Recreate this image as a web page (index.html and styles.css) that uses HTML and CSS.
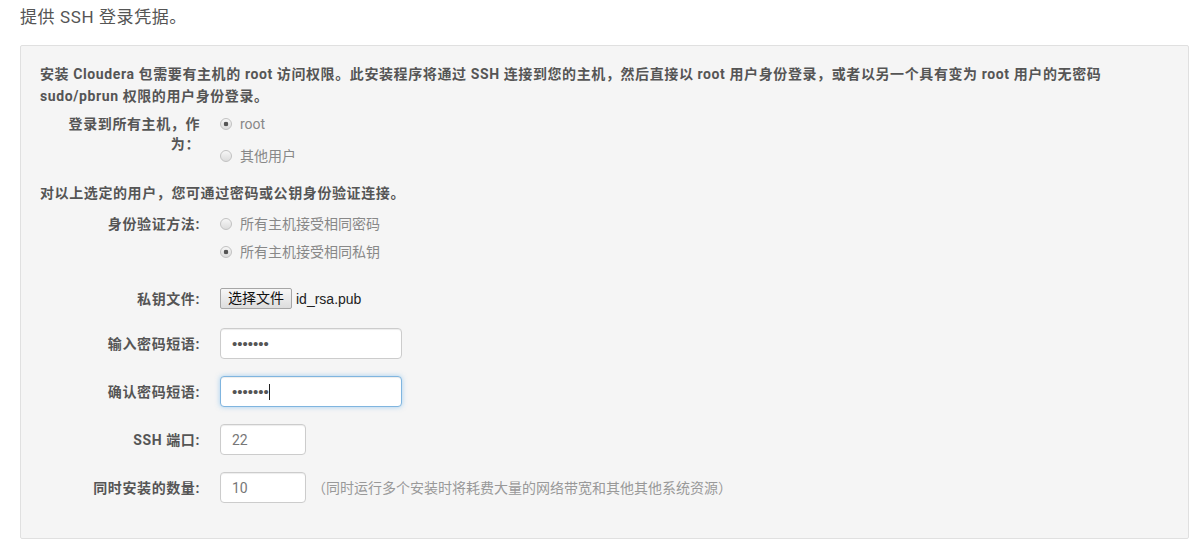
FILE: index.html
```html
<!DOCTYPE html>
<html lang="zh-CN">
<head>
  <meta charset="UTF-8" />
  <title>提供 SSH 登录凭据</title>
  <link rel="stylesheet" href="styles.css">
</head>
<body>
  <div class="page">
    <h1 class="page-title">提供 SSH 登录凭据。</h1>

    <form class="well">
      <p class="intro">安装 Cloudera 包需要有主机的 root 访问权限。此安装程序将通过 SSH 连接到您的主机，然后直接以 root 用户身份登录，或者以另一个具有变为 root 用户的无密码 sudo/pbrun 权限的用户身份登录。</p>

      <div class="control-group group-login">
        <label class="control-label">登录到所有主机，作<br>为：</label>
        <div class="controls">
          <label class="radio"><input type="radio" name="user" checked> root</label>
          <label class="radio"><input type="radio" name="user"> 其他用户</label>
        </div>
      </div>

      <p class="subhead">对以上选定的用户，您可通过密码或公钥身份验证连接。</p>

      <div class="control-group group-auth">
        <label class="control-label">身份验证方法:</label>
        <div class="controls">
          <label class="radio"><input type="radio" name="auth"> 所有主机接受相同密码</label>
          <label class="radio"><input type="radio" name="auth" checked> 所有主机接受相同私钥</label>
        </div>
      </div>

      <div class="control-group group-file">
        <label class="control-label">私钥文件:</label>
        <div class="controls file-controls">
          <label class="file-btn">选择文件<input type="file" hidden></label>
          <span class="file-name">id_rsa.pub</span>
        </div>
      </div>

      <div class="control-group group-input first-input">
        <label class="control-label">输入密码短语:</label>
        <div class="controls">
          <input class="text-input" type="password" value="1234567">
        </div>
      </div>

      <div class="control-group group-input">
        <label class="control-label">确认密码短语:</label>
        <div class="controls">
          <div class="caret-wrap">
            <input class="text-input is-focused" type="password" value="1234567">
            <span class="caret"></span>
          </div>
        </div>
      </div>

      <div class="control-group group-input">
        <label class="control-label">SSH 端口:</label>
        <div class="controls">
          <input class="text-input small" type="text" value="22">
        </div>
      </div>

      <div class="control-group group-input">
        <label class="control-label">同时安装的数量:</label>
        <div class="controls inline-controls">
          <input class="text-input small" type="text" value="10">
          <span class="help-inline">（同时运行多个安装时将耗费大量的网络带宽和其他其他系统资源）</span>
        </div>
      </div>
    </form>
  </div>
</body>
</html>
```

FILE: styles.css
```css
body {
  margin: 0;
  font-family: Roboto, "Noto Sans CJK SC", sans-serif;
  font-size: 14px;
  color: #555;
  background-color: #fff;
}

.page {
  padding: 7px 12px 0 20px;
}

.page-title {
  margin: 0;
  font-size: 17px;
  font-weight: normal;
  letter-spacing: 0.6px;
  line-height: 20px;
  color: #555;
}

.well {
  margin: 18px 0 0;
  padding: 17px 19px 35px;
  background-color: #f5f5f5;
  border: 1px solid #e0e0e0;
  border-radius: 2px;
}

.intro {
  margin: 0 0 7px;
  max-width: 1110px;
  font-weight: bold;
  letter-spacing: 0.6px;
  line-height: 22px;
}

.control-group {
  display: flex;
  align-items: flex-start;
}

.control-label {
  flex-shrink: 0;
  width: 160px;
  margin-right: 20px;
  text-align: right;
  font-weight: bold;
  letter-spacing: 0.6px;
  line-height: 20px;
}

.controls {
  display: flex;
  flex-direction: column;
}

.radio {
  display: flex;
  align-items: center;
  gap: 8px;
  line-height: 20px;
  color: #888;
}

.radio input {
  appearance: none;
  width: 12px;
  height: 12px;
  margin: 0;
  border: 1px solid #c2c2c2;
  border-radius: 50%;
  background: linear-gradient(#f6f6f6, #dcdcdc);
}

.radio input:checked {
  background: radial-gradient(circle, #555 0 2px, transparent 2.6px), linear-gradient(#f6f6f6, #dcdcdc);
}

.group-login .radio + .radio {
  margin-top: 12px;
}

.subhead {
  margin: 17px 0 0;
  font-weight: bold;
  letter-spacing: 0.6px;
  line-height: 20px;
}

.group-auth {
  margin-top: 11px;
}

.group-auth .radio + .radio {
  margin-top: 8px;
}

.group-file {
  margin-top: 26px;
  align-items: center;
}

.file-controls,
.inline-controls {
  flex-direction: row;
  align-items: center;
}

.file-btn {
  height: 21px;
  box-sizing: border-box;
  padding: 0 7px;
  border: 1px solid #a6a6a6;
  border-radius: 2px;
  background: linear-gradient(#f7f7f7, #dddddd);
  color: #111;
  font-size: 14px;
  line-height: 19px;
}

.file-name {
  margin-left: 4px;
  font-family: "Liberation Sans", Arial, sans-serif;
  font-size: 14px;
  color: #222;
}

.group-input {
  margin-top: 17px;
  align-items: center;
}

.group-input.first-input {
  margin-top: 19px;
}

.text-input {
  width: 182px;
  height: 31px;
  box-sizing: border-box;
  margin: 0;
  padding: 0 11px;
  border: 1px solid #ccc;
  border-radius: 4px;
  background-color: #fff;
  box-shadow: inset 0 1px 1px rgba(0,0,0,0.075);
  font-family: Roboto, "Noto Sans CJK SC", sans-serif;
  font-size: 14px;
  color: #777;
  outline: none;
}

.text-input[type="password"] {
  color: #555;
  font-family: "Liberation Sans", Arial, sans-serif;
  font-size: 15px;
}

.text-input.small {
  width: 86px;
}

.text-input.is-focused {
  border-color: #80b5df;
  box-shadow: inset 0 1px 1px rgba(0,0,0,0.075), 0 0 5px rgba(82,168,236,0.5);
}

.caret-wrap {
  position: relative;
}

.caret {
  position: absolute;
  left: 49px;
  top: 8px;
  width: 1px;
  height: 16px;
  background-color: #222;
}

.help-inline {
  margin-left: 6px;
  font-size: 14px;
  color: #999;
  line-height: 20px;
}
```
